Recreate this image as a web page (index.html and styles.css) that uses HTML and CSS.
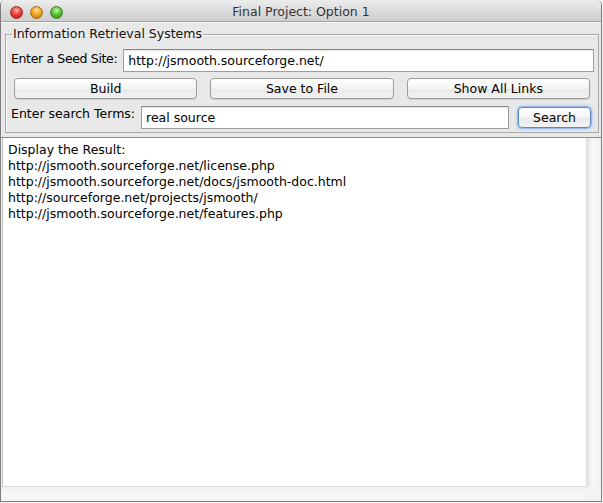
FILE: index.html
```html
<!DOCTYPE html>
<html>
<head>
<meta charset="utf-8">
<title>Final Project: Option 1</title>
<link rel="stylesheet" href="styles.css">
</head>
<body>
<div class="window">
  <div class="titlebar">
    <div class="lights">
      <span class="light red"></span>
      <span class="light yellow"></span>
      <span class="light green"></span>
    </div>
    <div class="title">Final Project: Option 1</div>
  </div>
  <div class="content">
    <fieldset class="group">
      <legend>Information Retrieval Systems</legend>
      <div class="row row-seed">
        <span class="label label-seed">Enter a Seed Site:</span>
        <div class="field">http://jsmooth.sourceforge.net/</div>
      </div>
      <div class="buttons">
        <div class="btn">Build</div>
        <div class="btn">Save to File</div>
        <div class="btn">Show All Links</div>
      </div>
      <div class="row row-search">
        <span class="label label-search">Enter search Terms:</span>
        <div class="field">real source</div>
        <div class="btn btn-default">Search</div>
      </div>
    </fieldset>
    <div class="scrollpane">
      <div class="textarea">
        <div>Display the Result:</div>
        <div>http://jsmooth.sourceforge.net/license.php</div>
        <div>http://jsmooth.sourceforge.net/docs/jsmooth-doc.html</div>
        <div>http://sourceforge.net/projects/jsmooth/</div>
        <div>http://jsmooth.sourceforge.net/features.php</div>
      </div>
      <div class="vtrack"></div>
      <div class="htrack"></div>
      <div class="corner"></div>
    </div>
  </div>
</div>
</body>
</html>
```
FILE: styles.css
```css
html, body {
  margin: 0;
  padding: 0;
  background: #f4f4f4;
}
body {
  font-family: "DejaVu Sans", "Liberation Sans", sans-serif;
  font-size: 12px;
  color: #000;
}
.window {
  width: 600px;
  height: 501px;
  border: 1px solid #7d7d7d;
  border-top: none;
  border-radius: 5px 5px 0 0;
  overflow: hidden;
  display: flex;
  flex-direction: column;
  background: #e8e8e8;
}
.titlebar {
  height: 21px;
  flex: none;
  border-bottom: 1px solid #a5a5a5;
  background: linear-gradient(#ececec, #d9d9d9 60%, #cfcfcf);
  display: flex;
  align-items: center;
  position: relative;
}
.lights {
  display: flex;
  gap: 7px;
  padding-left: 9px;
  padding-top: 3px;
}
.light {
  width: 13px;
  height: 13px;
  border-radius: 50%;
  box-sizing: border-box;
}
.red {
  background: radial-gradient(circle at 50% 30%, #ffb3ae 0, #f0433a 45%, #b5130c 100%);
  border: 1px solid #9a2a22;
}
.yellow {
  background: radial-gradient(circle at 50% 30%, #ffe7a3 0, #f5a623 45%, #b96d09 100%);
  border: 1px solid #a66a16;
}
.green {
  background: radial-gradient(circle at 50% 30%, #c9f5a5 0, #5cc43b 45%, #2d8a16 100%);
  border: 1px solid #3c7f23;
}
.title {
  flex: 1;
  text-align: center;
  font-size: 12.5px;
  color: #333;
  padding-top: 2px;
  margin-left: -62px;
}
.content {
  flex: 1;
  display: flex;
  flex-direction: column;
  border-top: 1px solid #f4f4f4;
}
.group {
  margin: 4px 2px 0 4px;
  padding: 0 4px 3px 5px;
  border: 1px solid #a9a9a9;
  box-shadow: inset 1px 1px 0 #fafafa;
  min-width: 0;
}
.group legend {
  padding: 0 1px 0 1px;
  margin-left: 1px;
  font-size: 12.5px;
  line-height: 14px;
  color: #111;
}
.row {
  display: flex;
  align-items: flex-start;
}
.row-seed {
  margin-top: 8px;
  gap: 6px;
}
.row-search {
  margin-top: 7px;
  gap: 6px;
}
.label {
  flex: none;
  padding-top: 2px;
  font-size: 12.5px;
}
.label-seed {
  letter-spacing: -0.35px;
}
.label-search {
  padding-top: 0;
}
.field {
  flex: 1;
  height: 21px;
  line-height: 21px;
  border: 1px solid #9e9e9e;
  border-top-color: #8a8a8a;
  background: #fff;
  box-shadow: inset 0 1px 0 #e4e4e4;
  padding: 0 4px;
  font-size: 12.5px;
}
.buttons {
  display: grid;
  grid-template-columns: repeat(3, 1fr);
  gap: 13px;
  margin: 6px 4px 0 3px;
}
.btn {
  height: 19px;
  line-height: 19px;
  text-align: center;
  border: 1px solid #9c9c9c;
  border-radius: 4px;
  background: linear-gradient(#ffffff, #f4f4f4 50%, #e9e9e9 51%, #f3f3f3);
  box-shadow: 0 1px 0 #d0d0d0;
  font-size: 12.5px;
}
.btn-default {
  flex: none;
  width: 71px;
  margin: 1px 3px 0 3px;
  border-color: #5c89c4;
  box-shadow: 0 0 0 1px #9dbde6, 0 0 2px 2px #c3d8f2;
}
.scrollpane {
  flex: 1;
  margin-top: 4px;
  border-top: 1px solid #8c8c8c;
  display: grid;
  grid-template-columns: 1fr 14px;
  grid-template-rows: 1fr 14px;
  background: #f5f5f5;
}
.textarea {
  background: #fff;
  border-left: 1px solid #bdbdbd;
  border-right: 1px solid #dcdcdc;
  border-bottom: 1px solid #dcdcdc;
  margin-left: 1px;
  padding: 4px 0 0 5px;
  font-size: 12.5px;
  line-height: 16px;
  white-space: nowrap;
  overflow: hidden;
}
.vtrack {
  background: linear-gradient(to right, #e3e3e3, #f7f7f7 40%, #f2f2f2);
}
.htrack {
  background: linear-gradient(#f0f0f0, #f8f8f8 50%, #f3f3f3);
}
.corner {
  background: #f3f3f3;
}
```
